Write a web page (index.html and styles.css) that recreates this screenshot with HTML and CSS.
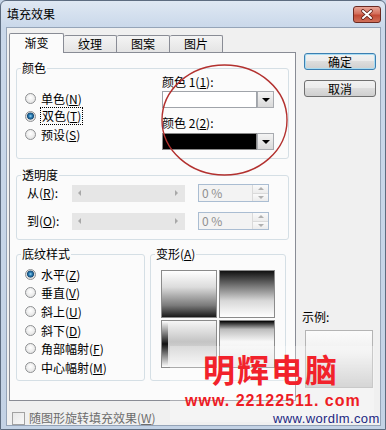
FILE: index.html
```html
<!DOCTYPE html>
<html>
<head>
  <title>填充效果</title>
  <link rel="stylesheet" href="styles.css">
</head>
<body>
  <div class="window">
    <div class="titlebar">
      <span class="title">填充效果</span>
      <span class="close">
        <svg width="28" height="17" viewBox="0 0 28 17">
          <path d="M10 5 L18 12 M18 5 L10 12" stroke="#5a1d16" stroke-width="3.6" stroke-linecap="round"/>
          <path d="M10 5 L18 12 M18 5 L10 12" stroke="#fff" stroke-width="2" stroke-linecap="round"/>
        </svg>
      </span>
    </div>
    <div class="client">
      <div class="left">
        <div class="tabrow">
          <div class="tab active">渐变</div>
          <div class="tab">纹理</div>
          <div class="tab">图案</div>
          <div class="tab">图片</div>
        </div>
        <div class="panel">
          <fieldset class="group color-group">
            <legend>颜色</legend>
            <div class="color-row">
              <div class="radios">
                <div class="radio-row"><span class="radio"></span>单色(<u>N</u>)</div>
                <div class="radio-row"><span class="radio checked"></span><span class="focus">双色(<u>T</u>)</span></div>
                <div class="radio-row"><span class="radio"></span>预设(<u>S</u>)</div>
              </div>
              <div class="pickers">
                <div class="pick-label">颜色 1(<u>1</u>):</div>
                <div class="combo"><span class="swatch"></span><span class="drop"></span></div>
                <div class="pick-label second">颜色 2(<u>2</u>):</div>
                <div class="combo last"><span class="swatch black"></span><span class="drop"></span></div>
              </div>
            </div>
          </fieldset>

          <fieldset class="group alpha-group">
            <legend>透明度</legend>
            <div class="alpha-row">
              <span class="alpha-label">从(<u>R</u>):</span>
              <span class="slider"><span class="arr-l"></span><span class="arr-r"></span></span>
              <span class="spin"><span class="spin-text">0 %</span><span class="spin-btns"><span class="up"></span><span class="down"></span></span></span>
            </div>
            <div class="alpha-row second">
              <span class="alpha-label">到(<u>O</u>):</span>
              <span class="slider"><span class="arr-l"></span><span class="arr-r"></span></span>
              <span class="spin"><span class="spin-text">0 %</span><span class="spin-btns"><span class="up"></span><span class="down"></span></span></span>
            </div>
          </fieldset>

          <div class="bottom-row">
            <fieldset class="group shade-group">
              <legend>底纹样式</legend>
              <div class="radio-row tall"><span class="radio checked"></span>水平(<u>Z</u>)</div>
              <div class="radio-row tall"><span class="radio"></span>垂直(<u>V</u>)</div>
              <div class="radio-row tall"><span class="radio"></span>斜上(<u>U</u>)</div>
              <div class="radio-row tall"><span class="radio"></span>斜下(<u>D</u>)</div>
              <div class="radio-row tall"><span class="radio"></span>角部幅射(<u>F</u>)</div>
              <div class="radio-row tall"><span class="radio"></span>中心幅射(<u>M</u>)</div>
            </fieldset>
            <fieldset class="group variant-group">
              <legend>变形(<u>A</u>)</legend>
              <div class="variants">
                <div class="variant v1"></div>
                <div class="variant v2"></div>
                <div class="variant v3"></div>
                <div class="variant v4"></div>
              </div>
            </fieldset>
          </div>
        </div>
        <div class="check-row">
          <span class="checkbox"></span>
          <span class="check-text">随图形旋转填充效果(<u>W</u>)</span>
        </div>
      </div>
      <div class="right">
        <button class="btn default">确定</button>
        <button class="btn">取消</button>
        <div class="sample-label">示例:</div>
        <div class="sample"></div>
      </div>
    </div>
  </div>

  <svg class="ring" width="130" height="116" viewBox="0 0 130 116">
    <ellipse cx="64.5" cy="57" rx="62.5" ry="55" fill="none" stroke="#b3312f" stroke-width="1.4"/>
  </svg>

  <div class="wm-haze"></div>
  <div class="wm-big">明辉电脑</div>
  <div class="wm-url">www. 22122511. com</div>
  <div class="wm-site">www.wordlm.com</div>
</body>
</html>
```

FILE: styles.css
```css
body {
  margin: 0;
  font-family: "Noto Sans CJK SC", "Liberation Sans", sans-serif;
  font-size: 12px;
  color: #000;
  background-color: #c4d3e6;
}
u {
  text-decoration: underline;
  text-underline-offset: 1px;
}
.window {
  width: 386px;
  height: 430px;
  box-sizing: border-box;
  border: 1px solid #5d6c80;
  border-radius: 6px 6px 0 0;
  background: linear-gradient(#dfe8f3, #cad8ea 26px, #c3d2e5);
  display: flex;
  flex-direction: column;
}
.titlebar {
  height: 26px;
  display: flex;
  align-items: center;
  justify-content: space-between;
  padding: 0 4px 0 6px;
}
.title {
  line-height: 14px;
}
.close {
  width: 28px;
  height: 17px;
  box-sizing: border-box;
  border: 1px solid #6b2a22;
  border-radius: 3px;
  background: linear-gradient(#e8a596, #d46f5c 45%, #c24a35 55%, #d0705a);
  display: flex;
  align-items: center;
  justify-content: center;
}
.close svg {
  display: block;
  margin: -1px;
}
.client {
  flex: 1;
  margin: 0 4px 3px 5px;
  border: 1px solid #95a4b8;
  background-color: #f0f0f0;
  display: flex;
  padding: 5px 0 0 2px;
}
.left {
  width: 287px;
}
.tabrow {
  display: flex;
  align-items: flex-end;
  height: 19px;
}
.tab {
  box-sizing: border-box;
  width: 53px;
  height: 17px;
  border: 1px solid #898c95;
  border-left: none;
  border-bottom: none;
  background: linear-gradient(#f4f4f4, #e4e4e4);
  text-align: center;
  line-height: 15px;
  border-radius: 2px 2px 0 0;
}
.tab.active {
  width: 55px;
  height: 20px;
  border-left: 1px solid #898c95;
  background: #fbfbfb;
  margin-bottom: -1px;
  position: relative;
  z-index: 1;
  line-height: 18px;
}
.panel {
  box-sizing: border-box;
  height: 349px;
  border: 1px solid #898c95;
  background-color: #fbfbfb;
  padding: 0 0 0 6px;
}
.group {
  margin: 0;
  padding: 0;
  min-width: 0;
  border: 1px solid #d5dfe5;
  border-radius: 3px;
}
.group legend {
  padding: 0 1px;
  margin-left: 4px;
  line-height: 14px;
}
.color-group {
  width: 273px;
  box-sizing: border-box;
  margin-top: 8px;
  padding-bottom: 8px;
}
.color-row {
  display: flex;
}
.radios {
  width: 145px;
  padding-top: 14px;
}
.radio-row {
  display: flex;
  align-items: center;
  height: 18px;
}
.radio-row.tall {
  height: 18.6px;
}
.radio {
  width: 11px;
  height: 11px;
  box-sizing: border-box;
  border-radius: 50%;
  border: 1px solid #8e9092;
  background: radial-gradient(circle at 50% 40%, #ffffff, #dcdcdc);
  margin: 0 5px 0 8px;
}
.radio.checked {
  background: radial-gradient(circle at 50% 45%, #9ad8f4 0, #2d7fb6 1.6px, #174d78 3.2px, #dcdcdc 3.8px, #f4f4f4 100%);
}
.focus {
  outline: 1px dotted #000;
  outline-offset: 0;
  padding: 0 1px;
  line-height: 16px;
}
.pickers {
  width: 112px;
}
.pick-label {
  line-height: 14px;
  height: 14px;
}
.pick-label.second {
  margin-top: 8px;
}
.combo {
  display: flex;
  height: 17px;
  margin-top: 2px;
}
.combo.last {
  margin-top: 3px;
}
.swatch {
  flex: 1;
  box-sizing: border-box;
  border: 1px solid #a0a4aa;
  background-color: #fff;
}
.swatch.black {
  background-color: #000;
  border-color: #8a8a8a;
}
.drop {
  width: 17px;
  box-sizing: border-box;
  border: 1px solid #a8abb0;
  background: linear-gradient(#f4f4f4, #d9d9d9);
  display: flex;
  align-items: center;
  justify-content: center;
}
.drop::before {
  content: "";
  border-left: 4px solid transparent;
  border-right: 4px solid transparent;
  border-top: 4px solid #000;
}
.alpha-group {
  width: 273px;
  box-sizing: border-box;
  margin-top: 9px;
  padding: 2px 0 9px;
}
.alpha-row {
  display: flex;
  align-items: center;
  height: 18px;
}
.alpha-row.second {
  margin-top: 10px;
}
.alpha-label {
  width: 45px;
  margin-left: 10px;
  line-height: 14px;
}
.slider {
  width: 113px;
  height: 17px;
  background-color: #e6e6e6;
  display: flex;
  align-items: center;
  justify-content: space-between;
  padding: 0 7px 0 6px;
  box-sizing: border-box;
}
.arr-l {
  border-top: 3px solid transparent;
  border-bottom: 3px solid transparent;
  border-right: 3px solid #a8a8a8;
}
.arr-r {
  border-top: 3px solid transparent;
  border-bottom: 3px solid transparent;
  border-left: 3px solid #a8a8a8;
}
.spin {
  width: 71px;
  height: 18px;
  margin-left: 13px;
  box-sizing: border-box;
  border: 1px solid #aabdd2;
  background-color: #f3f3f3;
  display: flex;
}
.spin-text {
  flex: 1;
  color: #8f8f8f;
  padding-left: 3px;
  line-height: 16px;
}
.spin-btns {
  width: 15px;
  display: flex;
  flex-direction: column;
  border-left: 1px solid #dadada;
}
.spin-btns span {
  flex: 1;
  display: flex;
  align-items: center;
  justify-content: center;
  background: linear-gradient(#fafafa, #ececec);
}
.spin-btns .up {
  border-bottom: 1px solid #dadada;
}
.spin-btns .up::before {
  content: "";
  border-left: 3px solid transparent;
  border-right: 3px solid transparent;
  border-bottom: 3px solid #b0b0b0;
}
.spin-btns .down::before {
  content: "";
  border-left: 3px solid transparent;
  border-right: 3px solid transparent;
  border-top: 3px solid #b0b0b0;
}
.bottom-row {
  display: flex;
  gap: 5px;
  margin-top: 7px;
}
.shade-group {
  width: 129px;
  box-sizing: border-box;
  padding: 4px 0 3px;
}
.variant-group {
  width: 136px;
  box-sizing: border-box;
}
.variants {
  display: grid;
  grid-template-columns: 56px 56px;
  grid-template-rows: 48px 48px;
  gap: 2px;
  margin: 9px 0 0 10px;
}
.variant {
  box-sizing: border-box;
  border: 1px solid #8b8b8b;
}
.v1 {
  background: linear-gradient(#ffffff, #dcdcdc 35%, #7a7a7a 75%, #1a1a1a);
}
.v2 {
  background: linear-gradient(#111111, #6e6e6e 30%, #d8d8d8 65%, #ffffff);
}
.v3 {
  background:
    linear-gradient(#ffffff, #111111 50%, #ffffff) left / 6px 100% no-repeat,
    linear-gradient(#f6f6f6, #c4c4c4 45%, #f6f6f6);
}
.v4 {
  background: linear-gradient(#000000, #bdbdbd 18%, #f8f8f8 45%, #e6e6e6 100%);
}
.check-row {
  display: flex;
  align-items: center;
  margin: 10px 0 0 3px;
}
.checkbox {
  width: 13px;
  height: 13px;
  box-sizing: border-box;
  border: 1px solid #a2a2a2;
  background: linear-gradient(135deg, #e8e8e8, #f8f8f8);
}
.check-text {
  margin-left: 4px;
  color: #6d6d6d;
  line-height: 14px;
}
.right {
  margin-left: 8px;
  padding-top: 20px;
  display: flex;
  flex-direction: column;
}
.btn {
  width: 72px;
  height: 17px;
  padding: 0;
  font-family: "Noto Sans CJK SC", sans-serif;
  font-size: 12px;
  line-height: 15px;
  color: #000;
  border: 1px solid #707070;
  border-radius: 3px;
  background: linear-gradient(#f2f2f2, #ebebeb 50%, #dddddd 50%, #cfcfcf);
}
.btn + .btn {
  margin-top: 10px;
}
.btn.default {
  border-color: #3c7fb1;
  box-shadow: inset 0 0 0 1px #a9dcf2;
}
.sample-label {
  margin: 213px 0 0 -2px;
  line-height: 14px;
}
.sample {
  width: 68px;
  height: 58px;
  margin: 6px 0 0 1px;
  box-sizing: border-box;
  border: 1px solid #b4b4b4;
  background: linear-gradient(#fbfbfb, #efefef 40%, #c6c6c6);
}
.ring {
  position: absolute;
  left: 160px;
  top: 63px;
}
.wm-haze {
  position: absolute;
  left: 170px;
  top: 346px;
  width: 204px;
  height: 76px;
  background-color: rgba(255, 255, 255, 0.28);
}
.wm-big {
  position: absolute;
  left: 203px;
  top: 348px;
  font-family: "Noto Sans CJK SC", sans-serif;
  font-weight: bold;
  font-size: 32px;
  line-height: 40px;
  letter-spacing: 2px;
  color: #f2222b;
}
.wm-url {
  position: absolute;
  left: 185px;
  top: 392px;
  font-family: "Liberation Sans", sans-serif;
  font-weight: bold;
  font-size: 16px;
  line-height: 18px;
  letter-spacing: 1px;
  color: #ee1c25;
}
.wm-site {
  position: absolute;
  left: 273px;
  top: 411px;
  font-family: "Liberation Sans", sans-serif;
  font-size: 13px;
  line-height: 15px;
  letter-spacing: 0.4px;
  color: #1c2782;
}
```
